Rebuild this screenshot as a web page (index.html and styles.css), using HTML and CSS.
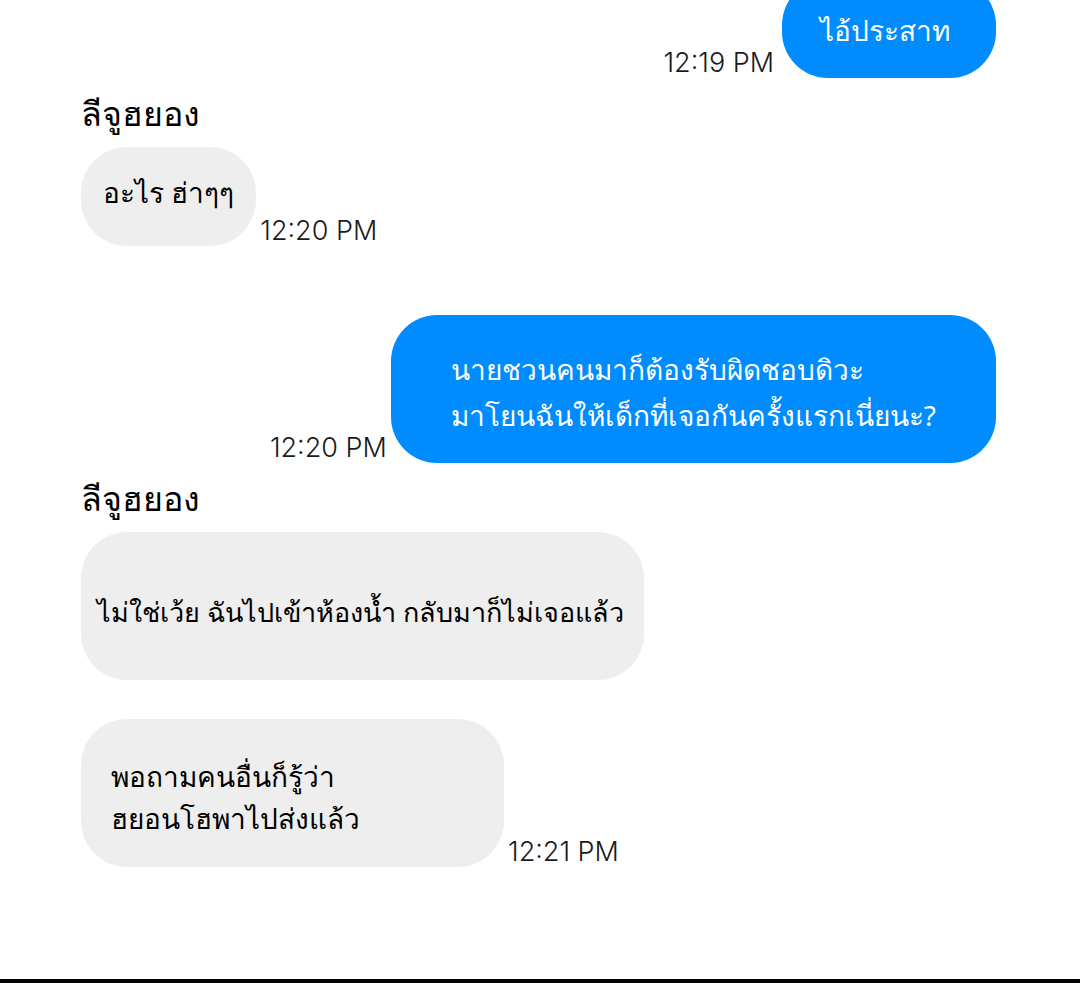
FILE: index.html
```html
<!doctype html>
<html lang="th">
	<head>
		<meta charset="UTF-8">
		<title>ลีจูฮยอง</title>

		<link rel="stylesheet" href="styles.css">
	</head>

	<body>
		<main class="chat">
			<div class="message sent first">
				<p class="bubble short">ไอ้ประสาท</p>
				<time class="time">12:19 PM</time>
			</div>

			<h2 class="name">ลีจูฮยอง</h2>
			<div class="message">
				<p class="bubble laugh">อะไร ฮ่าๆๆ</p>
				<time class="time">12:20 PM</time>
			</div>

			<div class="message sent reply">
				<p class="bubble tall">นายชวนคนมาก็ต้องรับผิดชอบดิวะ<br>มาโยนฉันให้เด็กที่เจอกันครั้งแรกเนี่ยนะ?</p>
				<time class="time">12:20 PM</time>
			</div>

			<h2 class="name">ลีจูฮยอง</h2>
			<div class="message">
				<p class="bubble tall line">ไม่ใช่เว้ย ฉันไปเข้าห้องน้ำ กลับมาก็ไม่เจอแล้ว</p>
			</div>
			<div class="message next">
				<p class="bubble tall wide">พอถามคนอื่นก็รู้ว่า<br>ฮยอนโฮพาไปส่งแล้ว</p>
				<time class="time">12:21 PM</time>
			</div>
		</main>

		<hr class="divider">
	</body>
</html>
```

FILE: styles.css
```css
* {
	padding: 0;
	margin: 0;
	box-sizing: border-box;
}
body {
	background-color: #fff;
	color: #000;
	font-size: 28px;
	font-family: "Noto Sans", sans-serif;
}
.chat {
	padding: 0 84px 112px 81px;
}
.message {
	display: flex;
	align-items: flex-end;
	gap: 4px;
}
.sent {
	flex-direction: row-reverse;
}
/* the conversation starts halfway through this bubble */
.first {
	margin-top: -21px;
	gap: 8px;
}
.reply {
	margin-top: 69px;
}
.next {
	margin-top: 39px;
}
.name {
	padding-top: 2px;
	font-size: 34px;
	font-weight: 500;
	line-height: 67px;
}
.bubble {
	min-height: 99px;
	border-radius: 46px;
	background-color: #eee;
	line-height: 42px;
}
.sent .bubble {
	background-color: #008cff;
	color: #fff;
	line-height: 46px;
}
.short {
	padding: 28px 46px 25px 38px;
}
.laugh {
	padding: 24px 22px 33px 22px;
}
.tall {
	min-height: 148px;
	padding: 31px 60px 25px 60px;
}
.line {
	padding: 59px 20px 47px 16px;
	font-size: 27px;
}
.wide {
	width: 423px;
	padding: 36px 30px 28px 30px;
}
.time {
	color: #1a1a1a;
	font-family: Inter, "Liberation Sans", sans-serif;
	font-size: 27px;
	font-weight: 300;
	line-height: 30px;
	white-space: nowrap;
}
.divider {
	border: none;
	height: 4px;
	background-color: #000;
}
```
